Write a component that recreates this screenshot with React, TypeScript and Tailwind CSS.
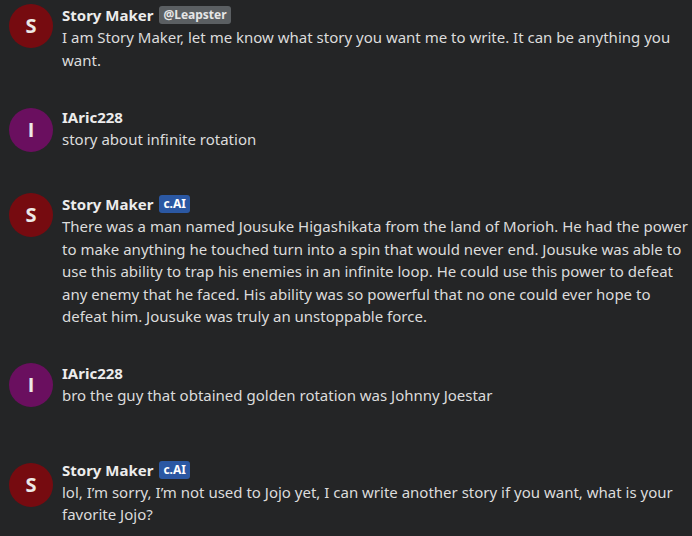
import React from "react";

type Msg = {
  name: string;
  initial: string;
  avatar: string;
  badge?: { label: string; className: string };
  text: string;
  mt: string;
  avatarMt: string;
};

const messages: Msg[] = [
  {
    name: "Story Maker",
    initial: "S",
    avatar: "bg-[#760b10]",
    badge: { label: "@Leapster", className: "bg-[#5b5f62] text-[#e6e6e6]" },
    text: "I am Story Maker, let me know what story you want me to write. It can be anything you want.",
    mt: "mt-[4px]",
    avatarMt: "mt-0",
  },
  {
    name: "IAric228",
    initial: "I",
    avatar: "bg-[#6a0f5f]",
    text: "story about infinite rotation",
    mt: "mt-[35px]",
    avatarMt: "mt-[2px]",
  },
  {
    name: "Story Maker",
    initial: "S",
    avatar: "bg-[#760b10]",
    badge: { label: "c.AI", className: "bg-[#2b58a3] text-white" },
    text: "There was a man named Jousuke Higashikata from the land of Morioh. He had the power to make anything he touched turn into a spin that would never end. Jousuke was able to use this ability to trap his enemies in an infinite loop. He could use this power to defeat any enemy that he faced. His ability was so powerful that no one could ever hope to defeat him. Jousuke was truly an unstoppable force.",
    mt: "mt-[41px]",
    avatarMt: "mt-0",
  },
  {
    name: "IAric228",
    initial: "I",
    avatar: "bg-[#6a0f5f]",
    text: "bro the guy that obtained golden rotation was Johnny Joestar",
    mt: "mt-[34px]",
    avatarMt: "mt-px",
  },
  {
    name: "Story Maker",
    initial: "S",
    avatar: "bg-[#760b10]",
    badge: { label: "c.AI", className: "bg-[#2b58a3] text-white" },
    text: "lol, I\u2019m sorry, I\u2019m not used to Jojo yet, I can write another story if you want, what is your favorite Jojo?",
    mt: "mt-[52px]",
    avatarMt: "mt-[4px]",
  },
];

function Message({ m }: { m: Msg }) {
  return (
    <div className={`flex items-start gap-[9px] pl-[9px] pr-[3px] ${m.mt}`}>
      <div
        className={`${m.avatar} ${m.avatarMt} flex h-[44px] w-[44px] shrink-0 items-center justify-center rounded-full font-['Open_Sans',sans-serif] text-[20px] font-bold text-[#ece8e6]`}
      >
        {m.initial}
      </div>
      <div className="min-w-0 flex-1">
        <div className="flex h-[22px] items-center gap-[6px]">
          <span className="text-[15px] font-bold leading-[22px] text-[#ececec]">
            {m.name}
          </span>
          {m.badge && (
            <span
              className={`${m.badge.className} rounded-[3px] px-[4px] text-[12px] font-bold leading-[18px]`}
            >
              {m.badge.label}
            </span>
          )}
        </div>
        <p className="text-[15px] leading-[22.5px] text-[#dcdcdc]">{m.text}</p>
      </div>
    </div>
  );
}

export default function App() {
  return (
    <div
      className="h-[536px] w-[692px] overflow-hidden bg-[#242526]"
      style={{ fontFamily: '"Noto Sans", sans-serif' }}
    >
      {messages.map((m, i) => (
        <Message key={i} m={m} />
      ))}
    </div>
  );
}
